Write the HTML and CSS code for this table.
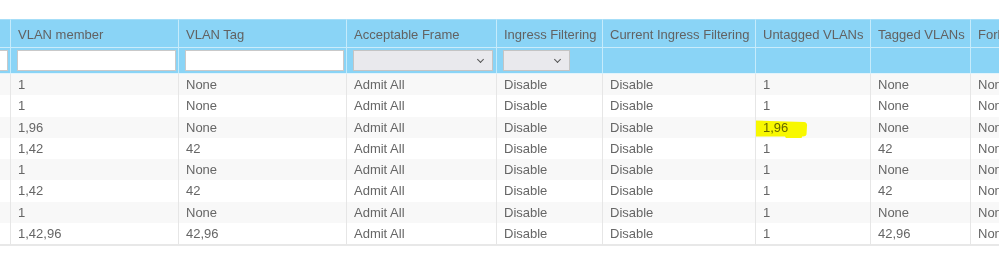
FILE: index.html
```html
<!DOCTYPE html>
<html>
<head>
<meta charset="utf-8">
<link rel="stylesheet" href="styles.css">
</head>
<body>
<div class="viewport">
<table class="grid">
<colgroup>
<col class="c0"><col class="c1"><col class="c2"><col class="c3"><col class="c4"><col class="c5"><col class="c6"><col class="c7"><col class="c8">
</colgroup>
<thead>
<tr class="head">
<th>Port</th><th>VLAN member</th><th>VLAN Tag</th><th>Acceptable Frame</th><th>Ingress Filtering</th><th>Current Ingress Filtering</th><th>Untagged VLANs</th><th>Tagged VLANs</th><th>Forbidden VLANs</th>
</tr>
<tr class="filter">
<th><input class="txt" type="text"></th>
<th><input class="txt" type="text"></th>
<th><input class="txt" type="text"></th>
<th><span class="sel wide"></span></th>
<th><span class="sel narrow"></span></th>
<th></th><th></th><th></th><th></th>
</tr>
</thead>
<tbody>
<tr><td>1</td><td>1</td><td>None</td><td>Admit All</td><td>Disable</td><td>Disable</td><td>1</td><td>None</td><td>None</td></tr>
<tr><td>2</td><td>1</td><td>None</td><td>Admit All</td><td>Disable</td><td>Disable</td><td>1</td><td>None</td><td>None</td></tr>
<tr><td>3</td><td>1,96</td><td>None</td><td>Admit All</td><td>Disable</td><td>Disable</td><td class="marked">1,96<svg class="marker" width="62" height="25" viewBox="0 0 62 25"><path d="M1,5 Q1,1.5 6,1.5 L56,3 Q59.5,3.5 59,7 L58.5,15.5 Q58,17.5 55,17.5 L54,17.5 Q53,22.5 50.5,23.5 L42,23.5 Q39,21 37,17.5 L5,17.5 Q1,17.5 1,13 Z" fill="#ffff00"/></svg></td><td>None</td><td>None</td></tr>
<tr><td>4</td><td>1,42</td><td>42</td><td>Admit All</td><td>Disable</td><td>Disable</td><td>1</td><td>42</td><td>None</td></tr>
<tr><td>5</td><td>1</td><td>None</td><td>Admit All</td><td>Disable</td><td>Disable</td><td>1</td><td>None</td><td>None</td></tr>
<tr><td>6</td><td>1,42</td><td>42</td><td>Admit All</td><td>Disable</td><td>Disable</td><td>1</td><td>42</td><td>None</td></tr>
<tr><td>7</td><td>1</td><td>None</td><td>Admit All</td><td>Disable</td><td>Disable</td><td>1</td><td>None</td><td>None</td></tr>
<tr><td>8</td><td>1,42,96</td><td>42,96</td><td>Admit All</td><td>Disable</td><td>Disable</td><td>1</td><td>42,96</td><td>None</td></tr>
</tbody>
</table>
</div>
</body>
</html>
```

FILE: styles.css
```css
html, body {
  margin: 0;
  padding: 0;
  background: #ffffff;
}
body {
  padding-top: 19px;
  font-family: "Liberation Sans", Arial, sans-serif;
  font-size: 13px;
  color: #666666;
}
.viewport {
  width: 999px;
  overflow: hidden;
}
.grid {
  margin-left: -90px;
  border-collapse: separate;
  border-spacing: 0;
  table-layout: fixed;
  width: 1300px;
}
.c0 { width: 100px; }
.c1 { width: 168px; }
.c2 { width: 168px; }
.c3 { width: 150px; }
.c4 { width: 106px; }
.c5 { width: 153px; }
.c6 { width: 115px; }
.c7 { width: 100px; }
.c8 { width: 240px; }

.grid th, .grid td {
  box-sizing: border-box;
  text-align: left;
  font-weight: normal;
  white-space: nowrap;
  overflow: hidden;
  padding: 0 2px 0 7px;
}
.head th {
  background: #8ad4f6;
  height: 29px;
  border-top: 1px solid #a6def8;
  border-left: 1px solid #c5ebfb;
  border-bottom: 1px solid #c9ecfb;
  color: #626262;
  padding-top: 1px;
}
.filter th {
  background: #8ad4f6;
  height: 26px;
  border-left: 1px solid #c5ebfb;
  border-bottom: 1px solid #e3f4fc;
  padding: 0 2px 0 6px;
  vertical-align: middle;
}
.txt {
  display: block;
  box-sizing: border-box;
  width: 100%;
  height: 21px;
  margin: 0;
  padding: 0;
  border: 1px solid #c9c9c9;
  background: #ffffff;
  outline: none;
}
.sel {
  display: block;
  box-sizing: border-box;
  height: 21px;
  border: 1px solid #c4c4c4;
  background: #e9e9ed;
  position: relative;
}
.sel::after {
  content: "";
  position: absolute;
  right: 9px;
  top: 6px;
  width: 4px;
  height: 4px;
  border-right: 1.4px solid #555;
  border-bottom: 1.4px solid #555;
  transform: rotate(45deg);
}
.wide { width: 140px; }
.narrow { width: 67px; }

.grid tbody tr {
  height: 21.25px;
}
.grid td {
  height: 21.25px;
  border-left: 1px solid #e6e6e6;
  line-height: 21px;
  padding-left: 7px;
}
.grid tbody tr:nth-child(odd) td {
  background: #f8f8f8;
}
.grid tbody tr:last-child td {
  border-bottom: 2px solid #e8e8e8;
  height: 23.25px;
}
.marked {
  position: relative;
}
.marker {
  position: absolute;
  left: -8px;
  top: 2px;
  mix-blend-mode: multiply;
  pointer-events: none;
}
```
